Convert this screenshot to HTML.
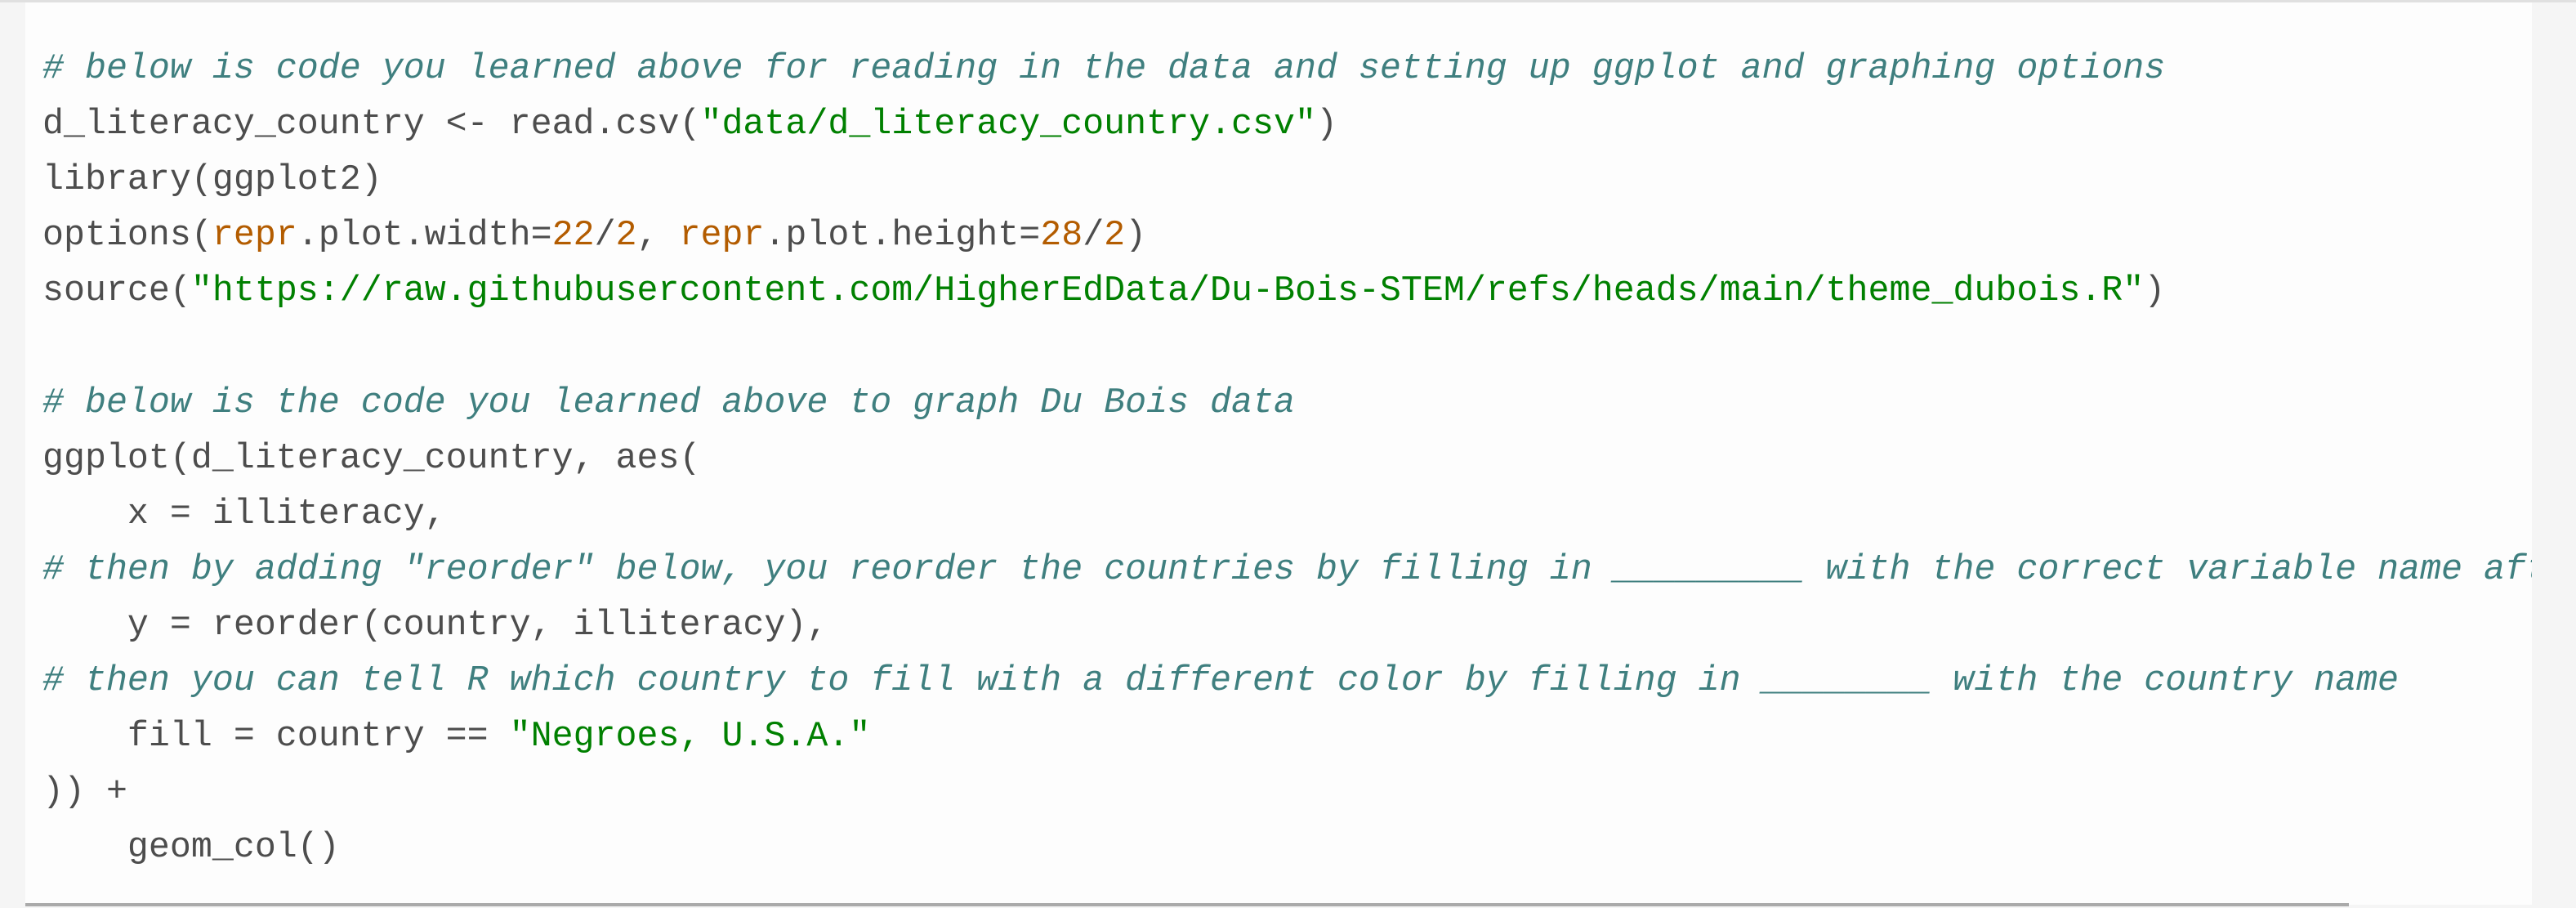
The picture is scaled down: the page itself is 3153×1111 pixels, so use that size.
<!DOCTYPE html>
<html><head><meta charset="utf-8"><style>
html,body{margin:0;padding:0;width:3153px;height:1111px;overflow:hidden;background:#f5f5f5;}
.top{position:absolute;left:0;top:0;width:3153px;height:3px;background:#e0e0e0;}
.code{position:absolute;left:31px;top:3px;width:3068px;height:1104px;background:#fdfdfd;overflow:hidden;}
pre{margin:0;position:absolute;left:21px;top:48px;font-family:"Liberation Mono",monospace;font-size:43.3px;line-height:68.1px;color:#4d4d4d;white-space:pre;}
.c{color:#3f7f7f;font-style:italic;}
.s{color:#008000;}
.o{color:#b35c00;}
.sb{position:absolute;left:31px;top:1105px;width:2844px;height:4px;background:#aaa;}
</style></head><body>
<div class="top"></div>
<div class="code"><pre><span class="c"># below is code you learned above for reading in the data and setting up ggplot and graphing options</span>
d_literacy_country &lt;- read.csv(<span class="s">"data/d_literacy_country.csv"</span>)
library(ggplot2)
options(<span class="o">repr</span>.plot.width=<span class="o">22</span>/<span class="o">2</span>, <span class="o">repr</span>.plot.height=<span class="o">28</span>/<span class="o">2</span>)
source(<span class="s">"https://raw.githubusercontent.com/HigherEdData/Du-Bois-STEM/refs/heads/main/theme_dubois.R"</span>)

<span class="c"># below is the code you learned above to graph Du Bois data</span>
ggplot(d_literacy_country, aes(
    x = illiteracy,
<span class="c"># then by adding "reorder" below, you reorder the countries by filling in _________ with the correct variable name after</span>
    y = reorder(country, illiteracy),
<span class="c"># then you can tell R which country to fill with a different color by filling in ________ with the country name</span>
    fill = country == <span class="s">"Negroes, U.S.A."</span>
)) +
    geom_col()</pre></div>
<div class="sb"></div>
</body></html>
